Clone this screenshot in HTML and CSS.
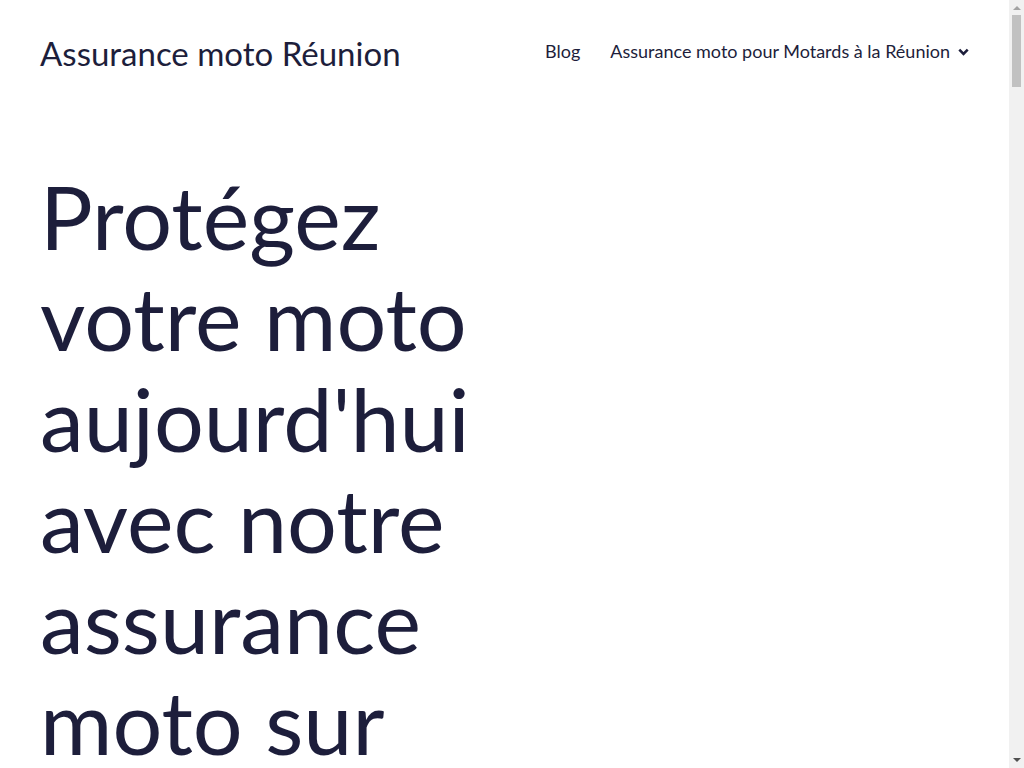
FILE: index.html
```html
<!DOCTYPE html>
<html lang="fr">
<head>
  <meta charset="UTF-8">
  <title>Assurance moto Réunion</title>
  <link rel="stylesheet" href="styles.css">
</head>
<body>
  <header class="site-header">
    <a class="site-title" href="#">Assurance moto Réunion</a>
    <nav class="site-nav">
      <a href="#">Blog</a>
      <a href="#" class="has-sub">Assurance moto pour Motards à la Réunion
        <svg class="chevron" width="11" height="8" viewBox="0 0 11 8" aria-hidden="true"><path d="M1.3 1.6 5.5 5.8 9.7 1.6" fill="none" stroke="currentColor" stroke-width="2.6"/></svg>
      </a>
    </nav>
  </header>
  <main class="site-main">
    <section class="hero">
      <h1 class="hero-title">Protégez votre moto aujourd'hui avec notre assurance moto sur La Réunion</h1>
    </section>
    <section class="block">
      <h2>Une assurance adaptée à votre deux-roues</h2>
      <p>Que vous rouliez en scooter, en roadster ou en trail, nous vous aidons à trouver la formule qui correspond à votre usage et à votre budget sur l'île.</p>
    </section>
    <section class="block">
      <h2>Les garanties essentielles</h2>
      <p>Responsabilité civile, vol, incendie, équipement du motard et assistance 0 km : comparez les garanties avant de choisir.</p>
    </section>
    <section class="block">
      <h2>Demandez votre devis</h2>
      <p>Quelques minutes suffisent pour recevoir une proposition personnalisée.</p>
    </section>
  </main>
  <footer class="site-footer">
    <p>Assurance moto Réunion</p>
  </footer>

  <!-- window scrollbar, as seen in the capture -->
  <div class="fake-scrollbar" aria-hidden="true">
    <span class="sb-arrow sb-up"></span>
    <span class="sb-thumb"></span>
    <span class="sb-arrow sb-down"></span>
  </div>
</body>
</html>
```

FILE: styles.css
```css
body {
  margin: 0;
  padding-right: 15px;
  background: #fff;
  color: #1d1e3b;
  font-family: 'Lato', 'Noto Sans', Arial, sans-serif;
}
a {
  color: inherit;
  text-decoration: none;
}
.site-header {
  display: flex;
  justify-content: space-between;
  align-items: center;
  padding: 34px 40px 28px 40px;
}
.site-title {
  font-size: 33px;
  line-height: 1.2;
}
.site-nav {
  display: flex;
  align-items: center;
  gap: 30px;
  font-size: 18px;
  padding-bottom: 5px;
}
.has-sub {
  display: flex;
  align-items: center;
  gap: 8px;
}
.chevron {
  margin-top: 1px;
}
.site-main {
  padding: 0 40px;
}
.hero {
  padding: 64px 0 120px;
}
.hero-title {
  margin: 0;
  max-width: 438px;
  font-size: 88px;
  font-weight: 400;
  line-height: 101px;
}
.block {
  padding: 0 0 1400px;
  max-width: 620px;
}
.block h2 {
  font-size: 40px;
  font-weight: 400;
  margin: 0 0 20px;
}
.block p {
  font-size: 18px;
  line-height: 1.6;
  margin: 0;
}
.site-footer {
  padding: 40px;
  font-size: 16px;
}
.fake-scrollbar {
  position: fixed;
  top: 0;
  right: 0;
  bottom: 0;
  width: 15px;
  background: #f1f1f1;
  display: flex;
  flex-direction: column;
  align-items: center;
}
.sb-arrow {
  width: 0;
  height: 0;
  border-left: 4px solid transparent;
  border-right: 4px solid transparent;
}
.sb-up {
  margin-top: 6px;
  border-bottom: 4px solid #a3a3a3;
}
.sb-down {
  margin-top: auto;
  margin-bottom: 6px;
  border-top: 4px solid #505050;
}
.sb-thumb {
  width: 9px;
  height: 72px;
  margin-top: 5px;
  background: #c1c1c1;
}
```
